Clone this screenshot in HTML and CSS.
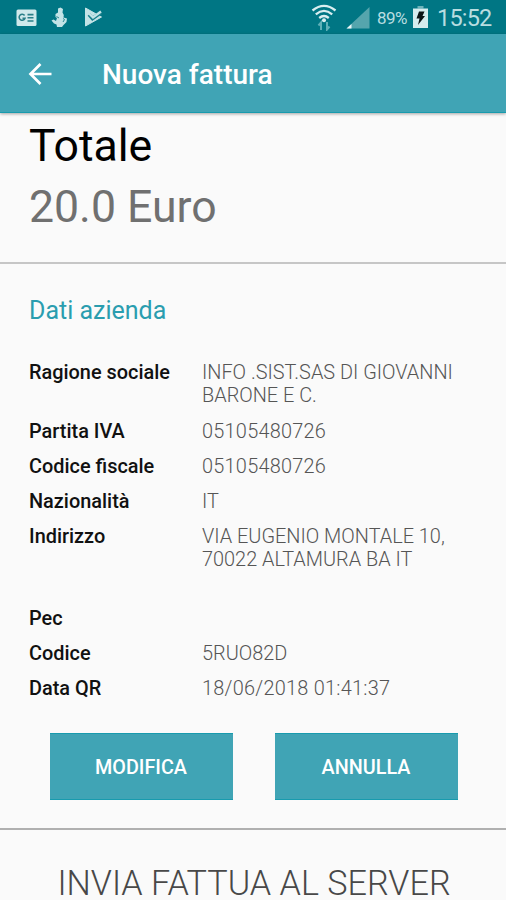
FILE: index.html
```html
<!DOCTYPE html>
<html lang="it">
<head>
    <meta charset="UTF-8">
    <meta name="viewport" content="width=device-width, initial-scale=1.0">
    <title>Nuova fattura</title>
    <link rel="stylesheet" href="styles.css">
</head>
<body>

    <div class="statusbar">
        <div class="status-left">
            <svg class="icon-news" width="21" height="18" viewBox="0 0 21 18">
                <rect x="0.5" y="0.5" width="20" height="16.5" rx="1.5" fill="#cfe9eb"/>
                <path d="M8.6 6.5A3 3 0 1 0 9 9.2H6.5M11.5 5.6h6M11.5 8.8h6M11.5 12h6" fill="none" stroke="#2a7f88" stroke-width="1.6"/>
            </svg>
            <svg class="icon-figure" width="17" height="21" viewBox="0 0 17 21">
                <path d="M7 1.5L9.5 .5L12 2L11.5 5.5L12.8 8L12.5 10.5L16 11.5L15.5 15L12.5 18L11 20H6L5.5 17.5L3 16.5L.5 13.5L2.5 12.5L5 14L6 11L4.5 10V7L7 5.5Z" fill="#c3e3e6"/>
                <path d="M5.5 9.5L8 11M12 11.5L13.5 12.5L12 15" fill="none" stroke="#2a8790" stroke-width="1"/>
            </svg>
            <svg class="icon-play" width="19" height="20" viewBox="0 0 19 20">
                <path d="M1.5 1L17.5 10L1.5 19Z" fill="#c3e3e6" stroke="#c3e3e6" stroke-linejoin="round"/>
                <path d="M5 7.5L8.5 11.5L17 5.5" fill="none" stroke="#1c818d" stroke-width="3.6"/>
                <path d="M5 6.5L9 10.5L17 4.5" fill="none" stroke="#c3e3e6" stroke-width="2.4"/>
            </svg>
        </div>
        <div class="status-right">
            <svg class="icon-wifi" width="26" height="27" viewBox="0 0 26 27">
                <g fill="none" stroke="#d9eef0" stroke-width="2.3">
                    <path d="M1.5 6.5Q13 -2.8 24.5 6.5"/>
                    <path d="M4.8 10.3Q13 3.5 21.2 10.3"/>
                    <path d="M8.2 14Q13 10 17.8 14"/>
                </g>
                <circle cx="13" cy="16.3" r="2" fill="#d9eef0"/>
                <path d="M10 26V18.5L7.5 21.5M16 18V25.5L18.5 22.5" fill="none" stroke="#5fb0b8" stroke-width="2"/>
            </svg>
            <svg class="icon-signal" width="24" height="22" viewBox="0 0 24 22">
                <path d="M23.5 0V21.5H0.5Z" fill="#55a5ad"/>
                <path d="M5.5 17V21.5H0.5Z" fill="#eaf6f7"/>
            </svg>
            <span class="battery-text">89%</span>
            <svg class="icon-battery" width="15" height="22" viewBox="0 0 15 22">
                <path d="M4.5 0h6v2.5H4.5z" fill="#6fb3ba"/>
                <path d="M0 2.5h15V22H0z" fill="#d5ecee"/>
                <path d="M6 5.5h5.5L9.5 10H12L5 19L6.5 12.5H3.5z" fill="#0b1416"/>
            </svg>
            <span class="clock">15:52</span>
        </div>
    </div>

    <header class="toolbar">
        <svg class="back" width="24" height="24" viewBox="0 0 24 24">
            <path d="M23.5 12H2.5M12.5 2L2.5 12L12.5 22" fill="none" stroke="#fff" stroke-width="2.7"/>
        </svg>
        <h1>Nuova fattura</h1>
    </header>

    <section class="total">
        <div class="total-label">Totale</div>
        <div class="total-value">20.0 Euro</div>
    </section>

    <section class="company">
        <h2>Dati azienda</h2>
        <dl class="details">
            <dt>Ragione sociale</dt>
            <dd>INFO .SIST.SAS DI GIOVANNI<br>BARONE E C.</dd>
            <dt>Partita IVA</dt>
            <dd class="number">05105480726</dd>
            <dt>Codice fiscale</dt>
            <dd class="number">05105480726</dd>
            <dt>Nazionalità</dt>
            <dd>IT</dd>
            <dt>Indirizzo</dt>
            <dd class="address">VIA EUGENIO MONTALE 10,<br>70022 ALTAMURA BA IT</dd>
            <dt>Pec</dt>
            <dd></dd>
            <dt>Codice</dt>
            <dd>5RUO82D</dd>
            <dt>Data QR</dt>
            <dd class="number">18/06/2018 01:41:37</dd>
        </dl>
        <div class="actions">
            <button>MODIFICA</button>
            <button>ANNULLA</button>
        </div>
    </section>

    <div class="send">INVIA FATTUA AL SERVER</div>

</body>
</html>
```
FILE: styles.css
```css
* {
    margin: 0; padding: 0;
    box-sizing: border-box;
}
body {
    font-family: Roboto, sans-serif;
    background: #fafafa;
    height: 900px;
    overflow: hidden;
    white-space: nowrap;
}
.statusbar {
    height: 34px;
    background: #007684;
    display: flex;
    justify-content: space-between;
    padding: 0 14px 0 16px;
}
.status-left, .status-right {
    display: flex;
    align-items: flex-start;
}
.icon-news { margin-top: 9px; }
.icon-figure { margin: 7px 0 0 14px; }
.icon-play { margin: 7px 0 0 16px; }
.icon-wifi { margin-top: 4px; }
.icon-signal { margin: 7px 0 0 9px; }
.icon-battery { margin: 6px 0 0 5px; }
.battery-text {
    width: 31px;
    margin-left: 7px;
    font-size: 17px;
    line-height: 36px;
    letter-spacing: -0.5px;
    color: #b8dde0;
}
.clock {
    width: 55px;
    margin-left: 9px;
    font-size: 23.5px;
    line-height: 36px;
    letter-spacing: -0.8px;
    color: #b8dde0;
}
.toolbar {
    position: relative;
    height: 79px;
    padding: 2px 0 0 28px;
    display: flex;
    align-items: center;
    background: #40a4b5;
    border-bottom: 1px solid #189bae;
    box-shadow: 0 1px 3px rgba(0,0,0,0.35);
}
.toolbar h1 {
    margin-left: 50px;
    font-size: 28px;
    font-weight: 500;
    color: #fff;
}
.total {
    height: 151px;
    padding: 3px 29px 0;
    border-bottom: 2px solid #c6c6c6;
    font-size: 44.6px;
    line-height: 61px;
}
.total-label { color: #000; }
.total-value { color: #707070; }
.company {
    height: 566px;
    padding: 32px 29px 0;
    border-bottom: 2px solid #b0b0b0;
}
h2 {
    font-size: 25px;
    font-weight: 400;
    line-height: 30px;
    color: #2a9daf;
}
.details {
    margin-top: 35px;
    display: grid;
    grid-template-columns: 173px 1fr;
    row-gap: 11.75px;
    font-size: 19.9px;
    line-height: 23.4px;
}
.details dt {
    color: #111;
    font-weight: 500;
}
.details dd {
    color: #555;
    font-weight: 300;
}
.details .number { letter-spacing: 0.25px; }
.details .address { min-height: 70.2px; }
.actions {
    display: flex;
    gap: 42px;
    padding-left: 20.5px;
    margin-top: 32px;
}
.actions button {
    width: 183px;
    height: 67px;
    padding-top: 3px;
    background: #40a4b5;
    border: 0 solid #189bae;
    border-width: 1px 0;
    color: #fff;
    font: 500 19.8px Roboto, sans-serif;
}
.send {
    height: 70px;
    padding: 36px 0 0 2px;
    text-align: center;
    font-size: 34.2px;
    line-height: 34px;
    font-weight: 300;
    color: #484848;
}
```
